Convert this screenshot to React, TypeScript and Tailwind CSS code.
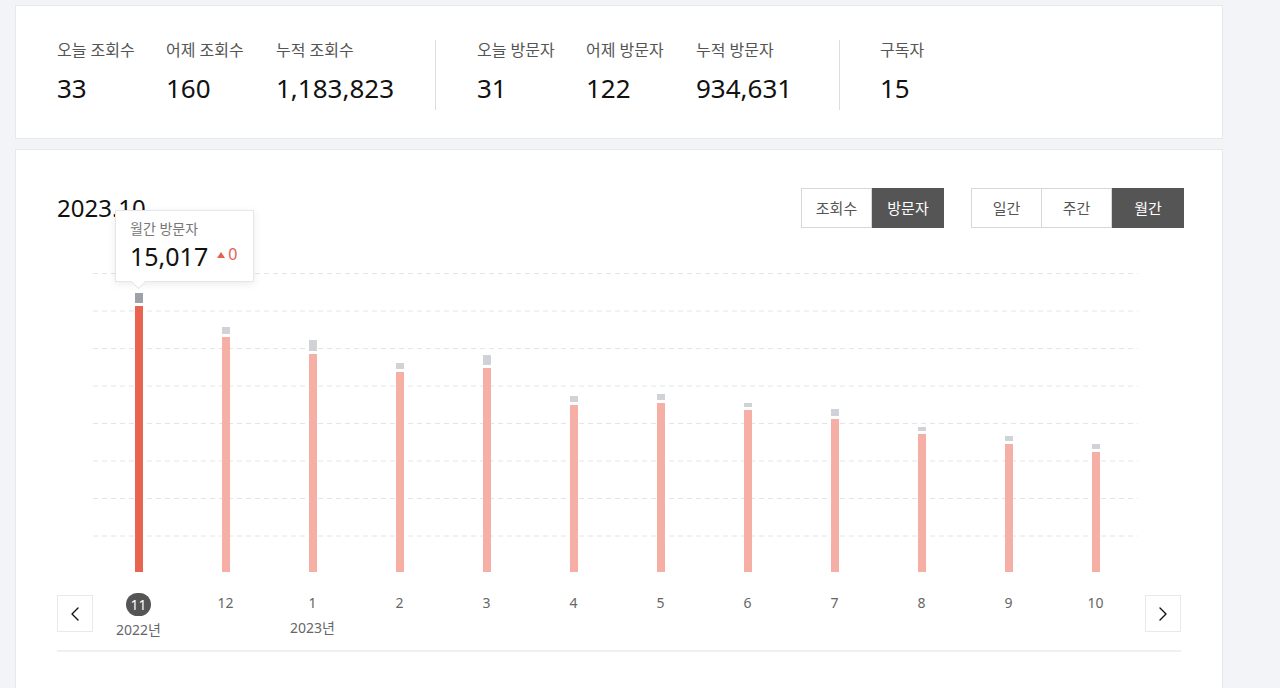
import { ChevronLeft, ChevronRight } from "lucide-react";

const font = "font-['Noto_Sans','Noto_Sans_CJK_KR',sans-serif]";

const viewStats = [
  { label: "오늘 조회수", value: "33", w: "w-[109px]" },
  { label: "어제 조회수", value: "160", w: "w-[110px]" },
  { label: "누적 조회수", value: "1,183,823", w: "w-[159px]" },
];
const visitStats = [
  { label: "오늘 방문자", value: "31", w: "w-[109px]" },
  { label: "어제 방문자", value: "122", w: "w-[110px]" },
  { label: "누적 방문자", value: "934,631", w: "w-[143px]" },
];

// page-y of the grey cap and of the bar top, plot starts at y=273
const bars = [
  { cap: 293, top: 306 },
  { cap: 327, top: 337 },
  { cap: 340, top: 354 },
  { cap: 363, top: 372 },
  { cap: 355, top: 368 },
  { cap: 396, top: 405 },
  { cap: 394, top: 403 },
  { cap: 403, top: 410 },
  { cap: 409, top: 419 },
  { cap: 427, top: 434 },
  { cap: 436, top: 444 },
  { cap: 444, top: 452 },
];
const months = ["11", "12", "1", "2", "3", "4", "5", "6", "7", "8", "9", "10"];

function Stat({ label, value, w }: { label: string; value: string; w: string }) {
  return (
    <div className={w}>
      <div className="text-[16px] leading-[20px] text-[#555]">{label}</div>
      <div className="mt-[11px] text-[26px] leading-[34px] text-[#111]">{value}</div>
    </div>
  );
}

function Chart() {
  return (
    <svg width="1045" height="300" className="block">
      {[0, 1, 2, 3, 4, 5, 6, 7].map((i) => (
        <line key={i} x1="0" x2="1045" y1={0.5 + i * 37.5} y2={0.5 + i * 37.5} stroke="#e4e4e6" strokeDasharray="5 4" />
      ))}
      {bars.map((b, i) => {
        const cx = 46 + i * 87;
        const sel = i === 0;
        return (
          <g key={i}>
            <rect x={cx - 4} y={b.cap - 273} width="8" height={b.top - 3 - b.cap} fill={sel ? "#9ca1aa" : "#cfd2d7"} />
            <rect x={cx - 4} y={b.top - 273} width="8" height={299 - (b.top - 273)} fill={sel ? "#e8644f" : "#f5afa5"} />
          </g>
        );
      })}
    </svg>
  );
}

export default function App() {
  return (
    <div className={`${font} w-[1280px] h-[688px] overflow-hidden bg-[#f3f4f7] pt-[5px] pl-[15px]`}>
      <div className="w-[1208px] h-[134px] bg-white border border-[#e6e8ec] pl-[41px] pt-[34px] flex">
        <div className="flex">
          {viewStats.map((s) => <Stat key={s.label} {...s} />)}
        </div>
        <div className="w-px h-[70px] bg-[#dcdde1]" />
        <div className="flex ml-[41px]">
          {visitStats.map((s) => <Stat key={s.label} {...s} />)}
        </div>
        <div className="w-px h-[70px] bg-[#dcdde1]" />
        <div className="ml-[40px]">
          <Stat label="구독자" value="15" w="w-[100px]" />
        </div>
      </div>

      <div className="relative mt-[10px] w-[1208px] h-[600px] bg-white border border-[#e6e8ec] px-[41px] pt-[38px]">
        <div className="flex items-center h-[40px]">
          <div className="text-[24px] leading-[40px] text-[#111]">2023.10</div>
          <div className="ml-auto -mr-[3px] flex text-[15px] text-[#555]">
            <div className="flex">
              <button className="w-[71px] h-[40px] border border-[#d5d7db]">조회수</button>
              <button className="w-[72px] h-[40px] bg-[#555] border border-[#555] text-white">방문자</button>
            </div>
            <div className="flex ml-[27px]">
              <button className="w-[71px] h-[40px] border border-[#d5d7db]">일간</button>
              <button className="w-[70px] h-[40px] border-y border-r border-[#d5d7db]">주간</button>
              <button className="w-[72px] h-[40px] bg-[#555] border border-[#555] text-white">월간</button>
            </div>
          </div>
        </div>

        <div className="mt-[45px] flex">
          <div className="w-[36px] shrink-0" />
          <Chart />
        </div>

        <div className="mt-[22px] flex items-start">
          <button className="w-[36px] h-[37px] border border-[#e8e9ee] flex items-center justify-center text-[#111]">
            <ChevronLeft size={24} strokeWidth={1.4} />
          </button>
          <div className="ml-[2px] w-[1044px] grid grid-cols-12">
            {months.map((m, i) => (
              <div key={m} className="flex flex-col items-center">
                {i === 0 ? (
                  <div className="w-[25px] h-[23px] -mt-[2px] rounded-full bg-[#555] text-white text-[14px] leading-[23px] text-center">{m}</div>
                ) : (
                  <div className="h-[21px] -mt-[2px] text-[14px] leading-[20px] text-[#666]">{m}</div>
                )}
                <div className="h-[22px] mt-[3px] text-[14px] leading-[22px] text-[#666]">
                  {i === 0 ? "2022년" : i === 2 ? "2023년" : ""}
                </div>
              </div>
            ))}
          </div>
          <button className="ml-auto w-[36px] h-[37px] border border-[#e8e9ee] flex items-center justify-center text-[#111]">
            <ChevronRight size={24} strokeWidth={1.4} />
          </button>
        </div>

        <div className="mt-[9px] h-[2px] bg-[#f0f0f2]" />

        <div className="absolute left-[99px] top-[60px] w-[139px] h-[72px] bg-white border border-[#e5e6ea] shadow-[0_2px_8px_rgba(0,0,0,0.08)] pl-[14px] pt-[9px]">
          <div className="text-[14px] leading-[18px] text-[#777]">월간 방문자</div>
          <div className="mt-[3px] flex items-center">
            <span className="text-[25px] leading-[30px] text-[#111]">15,017</span>
            <svg width="8" height="6" className="ml-[9px] -mt-[3px]" viewBox="0 0 8 6">
              <polygon points="4,0 8,6 0,6" fill="#e8604c" />
            </svg>
            <span className="ml-[3px] text-[16px] leading-[20px] text-[#e8604c] -mt-[5px]">0</span>
          </div>
          <div className="absolute left-[17px] -bottom-[6px] w-[11px] h-[11px] rotate-45 bg-white border-r border-b border-[#e5e6ea]" />
        </div>
      </div>
    </div>
  );
}
